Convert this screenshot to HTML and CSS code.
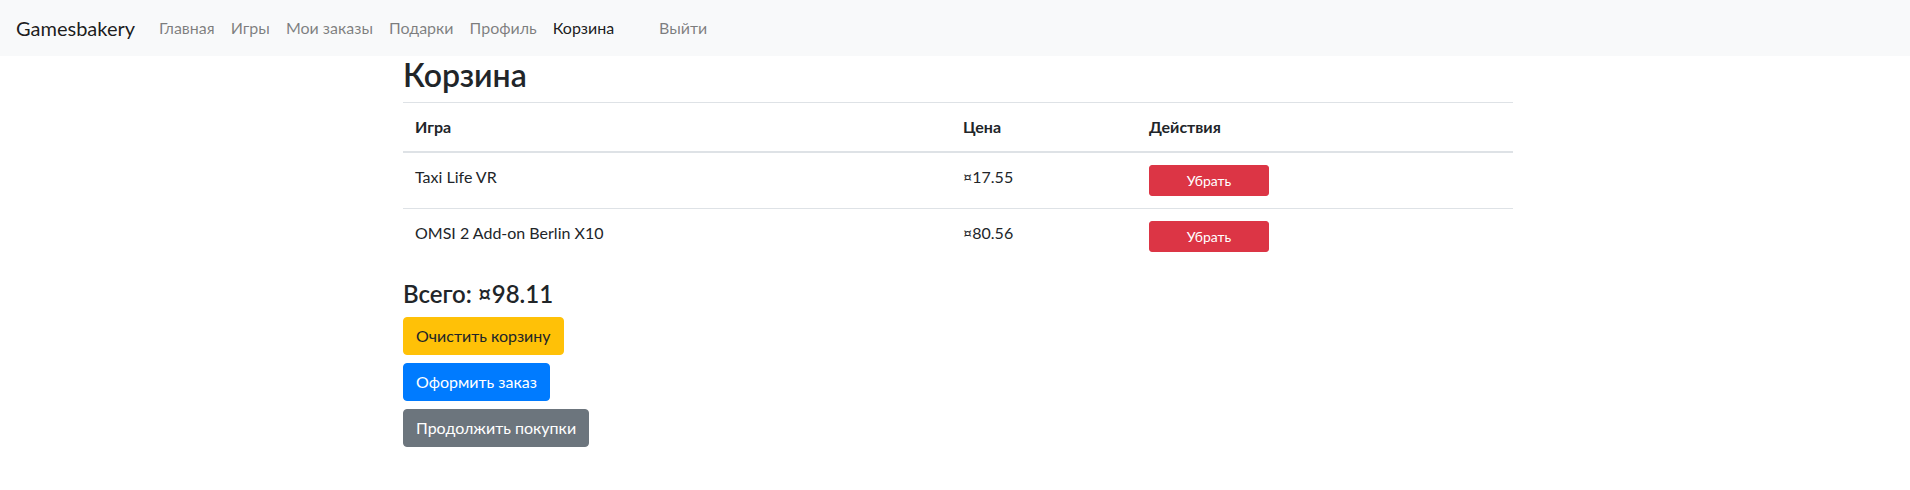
FILE: index.html
```html
<!DOCTYPE html>
<html lang="ru">
<head>
<meta charset="utf-8">
<title>Корзина - Gamesbakery</title>
<link rel="stylesheet" href="styles.css">
</head>
<body>
<nav class="navbar">
  <a class="brand" href="#">Gamesbakery</a>
  <ul class="nav">
    <li><a class="nav-link" href="#">Главная</a></li>
    <li><a class="nav-link" href="#">Игры</a></li>
    <li><a class="nav-link" href="#">Мои заказы</a></li>
    <li><a class="nav-link" href="#">Подарки</a></li>
    <li><a class="nav-link" href="#">Профиль</a></li>
    <li><a class="nav-link active" href="#">Корзина</a></li>
    <li class="logout"><a class="nav-link" href="#">Выйти</a></li>
  </ul>
</nav>
<main class="container">
  <h2 class="title">Корзина</h2>
  <table class="table">
    <thead>
      <tr><th class="col-game">Игра</th><th class="col-price">Цена</th><th>Действия</th></tr>
    </thead>
    <tbody>
      <tr><td>Taxi Life VR</td><td>¤17.55</td><td><button class="btn btn-sm btn-danger">Убрать</button></td></tr>
      <tr><td>OMSI 2 Add-on Berlin X10</td><td>¤80.56</td><td><button class="btn btn-sm btn-danger">Убрать</button></td></tr>
    </tbody>
  </table>
  <h4 class="total">Всего: ¤98.11</h4>
  <div class="actions">
    <button class="btn btn-warning">Очистить корзину</button>
    <button class="btn btn-primary">Оформить заказ</button>
    <button class="btn btn-secondary">Продолжить покупки</button>
  </div>
</main>
</body>
</html>
```
FILE: styles.css
```css
* { box-sizing: border-box; }
body {
  margin: 0;
  font-family: Lato, "Liberation Sans", sans-serif;
  font-size: 16px;
  line-height: 1.5;
  color: #212529;
  background: #fff;
}
a { text-decoration: none; }
.navbar {
  display: flex;
  align-items: center;
  padding: 8px 16px;
  background: #f8f9fa;
}
.brand {
  font-size: 20px;
  line-height: 30px;
  padding: 5px 0;
  margin-right: 16px;
  color: rgba(0,0,0,.9);
}
.nav {
  display: flex;
  list-style: none;
  margin: 0;
  padding: 0;
}
.nav-link {
  display: block;
  padding: 8px;
  color: rgba(0,0,0,.5);
}
.nav-link.active { color: rgba(0,0,0,.9); }
.logout { margin-left: 29px; }
.container {
  width: 1140px;
  margin: 0 auto;
  padding: 0 12px 0 18px;
}
.title {
  margin: 0 0 8px;
  font-size: 32px;
  font-weight: 600;
  line-height: 1.2;
}
.table {
  width: 100%;
  border-collapse: collapse;
  margin-bottom: 16px;
}
.table th, .table td {
  padding: 12px;
  text-align: left;
  vertical-align: top;
  border-top: 1px solid #dee2e6;
}
.table th { font-weight: 700; }
.table thead th { border-bottom: 2px solid #dee2e6; }
.col-game { width: 548px; }
.col-price { width: 186px; }
.total {
  margin: 0 0 8px;
  font-size: 24px;
  font-weight: 600;
  line-height: 1.2;
}
.actions {
  display: flex;
  flex-direction: column;
  align-items: flex-start;
  gap: 8px;
}
.btn {
  display: inline-block;
  font-family: inherit;
  font-size: 16px;
  line-height: 1.5;
  padding: 6px 12px;
  border: 1px solid transparent;
  border-radius: 4px;
  cursor: pointer;
}
.btn-sm {
  font-size: 14px;
  padding: 4px 8px;
  border-radius: 3px;
  width: 120px;
}
.btn-danger { background: #dc3545; border-color: #dc3545; color: #fff; }
.btn-warning { background: #ffc107; border-color: #ffc107; color: #212529; }
.btn-primary { background: #007bff; border-color: #007bff; color: #fff; }
.btn-secondary { background: #6c757d; border-color: #6c757d; color: #fff; }
```
